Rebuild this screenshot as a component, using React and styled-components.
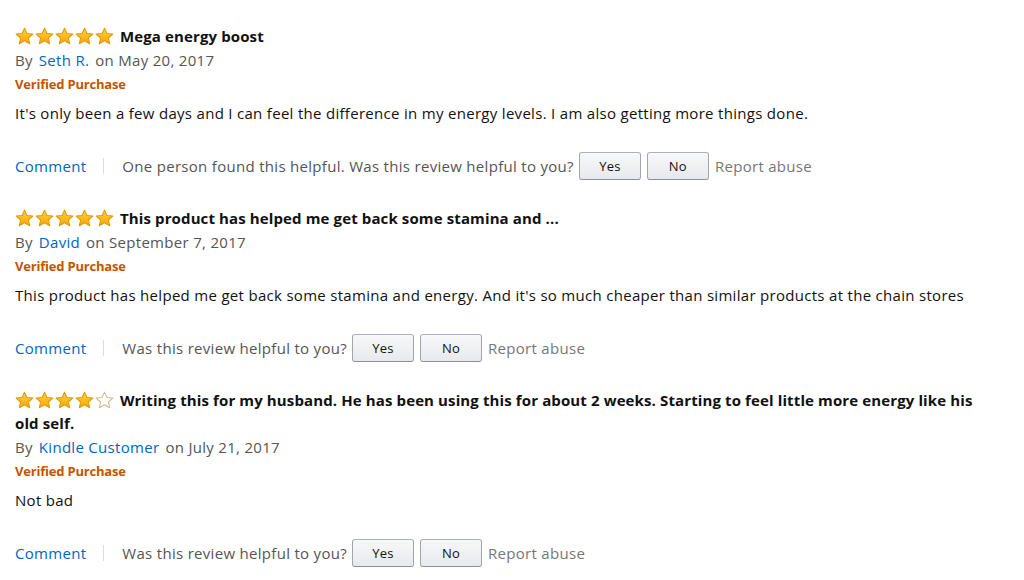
import React from "react";
import styled, { createGlobalStyle } from "styled-components";

const Global = createGlobalStyle`
  html, body { margin: 0; padding: 0; background: #fff; }
  body { font-family: "Open Sans", "Noto Sans", sans-serif; color: #111; }
`;

const Page = styled.div`
  width: 1024px;
  height: 580px;
  box-sizing: border-box;
  padding: 25px 40px 0 15px;
  overflow: hidden;
`;

const Review = styled.div`
  display: flex;
  flex-direction: column;
  margin-bottom: 27px;
`;

const TitleRow = styled.div`
  font-size: 15px;
  line-height: 23px;
  letter-spacing: 0.12px;
  font-weight: 700;
  color: #111;
`;

const Stars = styled.span`
  display: inline-flex;
  gap: 1px;
  vertical-align: -3px;
  margin-right: 6px;
`;

const Byline = styled.div`
  font-size: 15px;
  line-height: 23px;
  letter-spacing: 0.3px;
  color: #555;
  margin-top: 1px;
`;

const Author = styled.a`
  color: #0066c0;
  text-decoration: none;
  margin: 0 6px 0 6px;
`;

const Verified = styled.div`
  font-size: 13px;
  line-height: 24px;
  letter-spacing: -0.2px;
  font-weight: 700;
  color: #c45500;
`;

const Body = styled.div`
  font-size: 15px;
  line-height: 24px;
  letter-spacing: 0.3px;
  color: #111;
  margin-top: 5px;
`;

const Actions = styled.div`
  display: flex;
  align-items: center;
  margin-top: 27px;
  font-size: 15px;
  letter-spacing: 0.3px;
  color: #555;
  height: 28px;
`;

const CommentLink = styled.a`
  color: #0066c0;
  text-decoration: none;
`;

const Sep = styled.span`
  width: 1px;
  height: 16px;
  background: #ddd;
  margin: 0 18px 0 17px;
`;

const Helpful = styled.span`
  margin-right: 5px;
`;

const VoteButton = styled.button`
  width: 62px;
  height: 28px;
  box-sizing: border-box;
  border: 1px solid #adb1b8;
  border-color: #adb1b8 #a2a6ac #8d9096;
  border-radius: 3px;
  background: linear-gradient(to bottom, #f7f8fa, #e7e9ec);
  font-family: inherit;
  font-size: 13px;
  letter-spacing: 0.2px;
  color: #111;
  margin-right: 6px;
  padding: 0;
  cursor: pointer;
`;

const Report = styled.a`
  color: #777;
  text-decoration: none;
`;

const Star = ({ filled, id }) => (
  <svg width="19" height="18" viewBox="0 0 20 19">
    <defs>
      <linearGradient id={id} x1="0" y1="0" x2="0" y2="1">
        <stop offset="0" stopColor="#ffd24a" />
        <stop offset="1" stopColor="#f7a600" />
      </linearGradient>
    </defs>
    <path
      d="M10 1.2 L12.6 6.9 L18.8 7.5 L14.1 11.6 L15.5 17.7 L10 14.5 L4.5 17.7 L5.9 11.6 L1.2 7.5 L7.4 6.9 Z"
      fill={filled ? `url(#${id})` : "#fff"}
      stroke={filled ? "#e29a00" : "#d7b88a"}
      strokeWidth="1.1"
      strokeLinejoin="round"
    />
  </svg>
);

const StarRating = ({ value, rid }) => (
  <Stars>
    {[0, 1, 2, 3, 4].map((i) => (
      <Star key={i} filled={i < value} id={`g${rid}${i}`} />
    ))}
  </Stars>
);

const reviews = [
  {
    rating: 5,
    title: "Mega energy boost",
    author: "Seth R.",
    date: "on May 20, 2017",
    body: "It's only been a few days and I can feel the difference in my energy levels. I am also getting more things done.",
    helpful: "One person found this helpful. Was this review helpful to you?",
  },
  {
    rating: 5,
    title: "This product has helped me get back some stamina and ...",
    author: "David",
    date: "on September 7, 2017",
    body: "This product has helped me get back some stamina and energy. And it's so much cheaper than similar products at the chain stores",
    helpful: "Was this review helpful to you?",
  },
  {
    rating: 4,
    title: "Writing this for my husband. He has been using this for about 2 weeks. Starting to feel little more energy like his old self.",
    author: "Kindle Customer",
    date: "on July 21, 2017",
    body: "Not bad",
    helpful: "Was this review helpful to you?",
  },
];

export default function App() {
  return (
    <>
      <Global />
      <Page>
        {reviews.map((r, idx) => (
          <Review key={idx}>
            <TitleRow>
              <StarRating value={r.rating} rid={idx} />
              {r.title}
            </TitleRow>
            <Byline>
              By<Author href="#">{r.author}</Author>{r.date}
            </Byline>
            <Verified>Verified Purchase</Verified>
            <Body>{r.body}</Body>
            <Actions>
              <CommentLink href="#">Comment</CommentLink>
              <Sep />
              <Helpful>{r.helpful}</Helpful>
              <VoteButton>Yes</VoteButton>
              <VoteButton>No</VoteButton>
              <Report href="#">Report abuse</Report>
            </Actions>
          </Review>
        ))}
      </Page>
    </>
  );
}
